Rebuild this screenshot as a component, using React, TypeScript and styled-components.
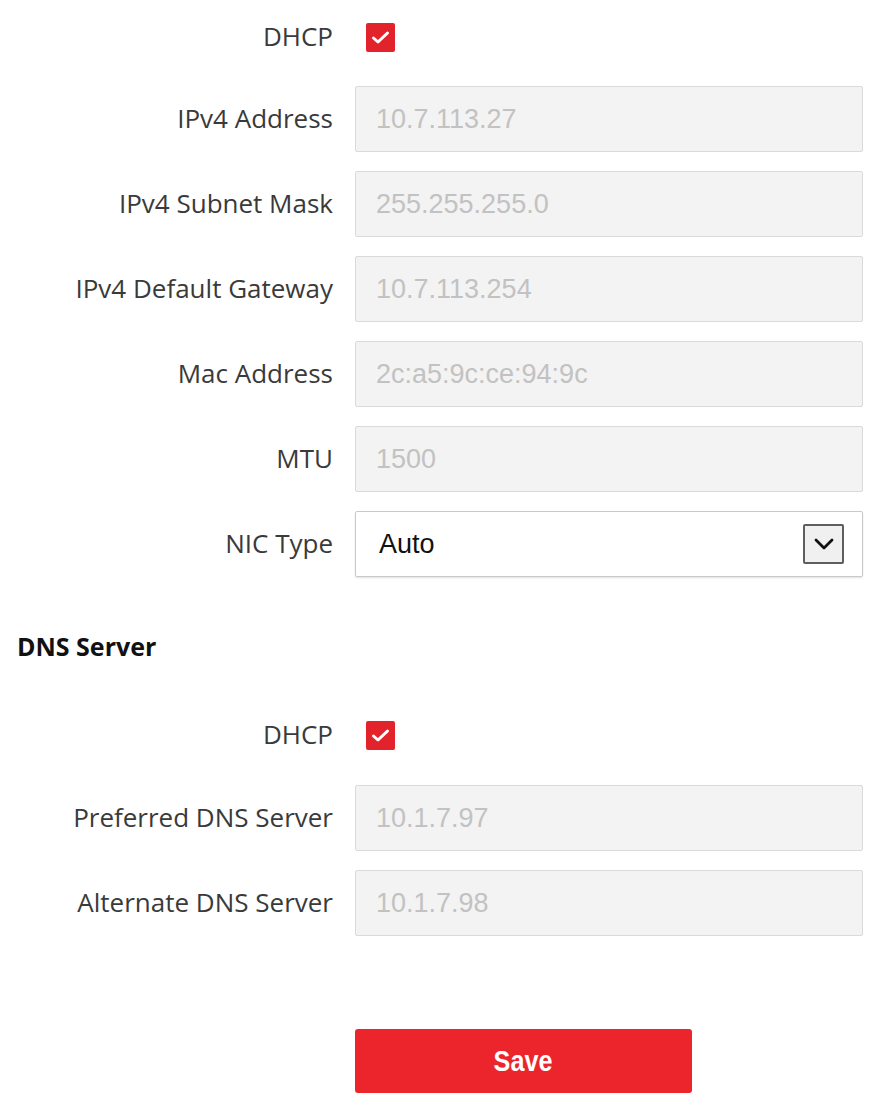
import styled, { createGlobalStyle } from 'styled-components';

const GlobalStyle = createGlobalStyle`
  html, body {
    margin: 0;
    padding: 0;
    background: #fff;
  }
`;

const Page = styled.div`
  width: 873px;
  min-height: 1109px;
  padding-top: 7px;
  box-sizing: border-box;
  font-family: "Open Sans", "Noto Sans", sans-serif;
`;

const Section = styled.div`
  display: flex;
  flex-direction: column;
  gap: 19px;
`;

const Row = styled.div<{ $h?: number }>`
  display: grid;
  grid-template-columns: 333px 508px;
  column-gap: 22px;
  align-items: center;
  height: ${(p) => p.$h ?? 66}px;
`;

const Label = styled.label`
  text-align: right;
  font-size: 26px;
  color: #3a3a3a;
  white-space: nowrap;
  margin-top: -3px;
`;

const Field = styled.div`
  height: 66px;
  box-sizing: border-box;
  display: flex;
  align-items: center;
  padding-left: 20px;
  background: #f3f3f3;
  border: 1px solid #dadada;
  border-radius: 2px;
  font-family: "Liberation Sans", Arial, sans-serif;
  font-size: 27px;
  color: #c2c2c2;
`;

const Select = styled.div`
  height: 66px;
  box-sizing: border-box;
  display: flex;
  align-items: center;
  justify-content: space-between;
  padding: 0 18px 0 23px;
  background: #fff;
  border: 1px solid #c9c9c9;
  border-radius: 2px;
  box-shadow: 0 1px 2px rgba(0, 0, 0, 0.12);
  font-family: "Liberation Sans", Arial, sans-serif;
  font-size: 27px;
  color: #111;
`;

const Arrow = styled.span`
  width: 41px;
  height: 40px;
  box-sizing: border-box;
  display: flex;
  align-items: center;
  justify-content: center;
  background: #f0f0f0;
  border: 2px solid #5e5e5e;
  border-radius: 2px;
`;

const Check = styled.span`
  width: 29px;
  height: 29px;
  margin-left: 11px;
  display: flex;
  align-items: center;
  justify-content: center;
  background: #e3232b;
  border-radius: 2px;
`;

const Heading = styled.h3`
  margin: 55px 0 44px 17px;
  font-size: 25px;
  line-height: 28px;
  font-weight: 700;
  color: #111;
`;

const Actions = styled.div`
  padding: 93px 0 0 355px;
`;

const SaveButton = styled.button`
  width: 337px;
  height: 64px;
  border: none;
  border-radius: 3px;
  background: #ec252c;
  color: #fff;
  font-family: "Liberation Sans", Arial, sans-serif;
  font-weight: 700;
  font-size: 30px;
  cursor: pointer;

  span {
    display: inline-block;
    transform: scaleX(0.84);
  }
`;

function Checkbox() {
  return (
    <Check>
      <svg width="19" height="15" viewBox="0 0 19 15">
        <path d="M2.5 8 L7 12 L16.5 3" fill="none" stroke="#fff" strokeWidth="3" strokeLinecap="round" strokeLinejoin="round" />
      </svg>
    </Check>
  );
}

function TextRow({ label, value }: { label: string; value: string }) {
  return (
    <Row>
      <Label>{label}</Label>
      <Field>{value}</Field>
    </Row>
  );
}

function DhcpRow({ h }: { h: number }) {
  return (
    <Row $h={h}>
      <Label>DHCP</Label>
      <Checkbox />
    </Row>
  );
}

const ipRows = [
  { label: 'IPv4 Address', value: '10.7.113.27' },
  { label: 'IPv4 Subnet Mask', value: '255.255.255.0' },
  { label: 'IPv4 Default Gateway', value: '10.7.113.254' },
  { label: 'Mac Address', value: '2c:a5:9c:ce:94:9c' },
  { label: 'MTU', value: '1500' },
];

const dnsRows = [
  { label: 'Preferred DNS Server', value: '10.1.7.97' },
  { label: 'Alternate DNS Server', value: '10.1.7.98' },
];

export default function App() {
  return (
    <>
      <GlobalStyle />
      <Page>
        <Section>
          <DhcpRow h={60} />
          {ipRows.map((r) => (
            <TextRow key={r.label} {...r} />
          ))}
          <Row>
            <Label>NIC Type</Label>
            <Select>
              Auto
              <Arrow>
                <svg width="20" height="12" viewBox="0 0 20 12">
                  <path d="M2 2 L10 10 L18 2" fill="none" stroke="#111" strokeWidth="2.8" strokeLinecap="round" strokeLinejoin="round" />
                </svg>
              </Arrow>
            </Select>
          </Row>
        </Section>

        <Heading>DNS Server</Heading>

        <Section>
          <DhcpRow h={62} />
          {dnsRows.map((r) => (
            <TextRow key={r.label} {...r} />
          ))}
        </Section>

        <Actions>
          <SaveButton>
            <span>Save</span>
          </SaveButton>
        </Actions>
      </Page>
    </>
  );
}
